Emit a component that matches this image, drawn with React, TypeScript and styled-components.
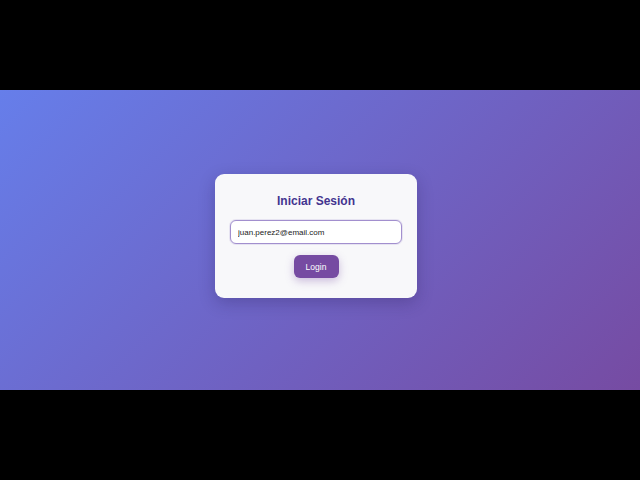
import React, { useState } from "react";
import styled, { createGlobalStyle } from "styled-components";

const GlobalStyle = createGlobalStyle`
  html, body {
    margin: 0;
    padding: 0;
    background: #000;
  }
  body {
    font-family: "Liberation Sans", Arial, sans-serif;
  }
`;

const Screen = styled.div`
  width: 640px;
  height: 480px;
  background: #000;
  display: flex;
  flex-direction: column;
  justify-content: center;
`;

const Stage = styled.div`
  height: 300px;
  background: linear-gradient(135deg, #667eea 0%, #764ba2 100%);
  display: flex;
  align-items: center;
  justify-content: center;
`;

const Card = styled.form`
  width: 202px;
  box-sizing: border-box;
  margin: 0 8px 8px 0;
  padding: 20px 15px 20px;
  background: #f8f8fa;
  border-radius: 9px;
  box-shadow: 0 5px 16px rgba(30, 20, 70, 0.25);
  display: flex;
  flex-direction: column;
  align-items: center;
`;

const Title = styled.h2`
  margin: 0 0 11px;
  font-size: 12px;
  line-height: 15px;
  font-weight: bold;
  color: #43348f;
`;

const Input = styled.input`
  width: 100%;
  height: 24px;
  box-sizing: border-box;
  padding: 0 7px;
  border: 1px solid #a28fce;
  border-radius: 6px;
  background: #fff;
  font-family: "Liberation Sans", Arial, sans-serif;
  font-size: 8px;
  color: #222;
  outline: none;
  box-shadow: 0 0 0 1px rgba(162, 143, 206, 0.2);
`;

const Button = styled.button`
  margin-top: 11px;
  width: 45px;
  height: 23px;
  border: none;
  border-radius: 6px;
  background: #764ba2;
  color: #fff;
  font-family: "Liberation Sans", Arial, sans-serif;
  font-size: 8.5px;
  box-shadow: 0 3px 8px rgba(118, 75, 162, 0.35);
  cursor: pointer;
`;

const App = () => {
  const [email, setEmail] = useState("juan.perez2@email.com");

  return (
    <>
      <GlobalStyle />
      <Screen>
        <Stage>
          <Card onSubmit={(e) => e.preventDefault()}>
            <Title>Iniciar Sesión</Title>
            <Input value={email} onChange={(e) => setEmail(e.target.value)} />
            <Button type="submit">Login</Button>
          </Card>
        </Stage>
      </Screen>
    </>
  );
};

export default App;
